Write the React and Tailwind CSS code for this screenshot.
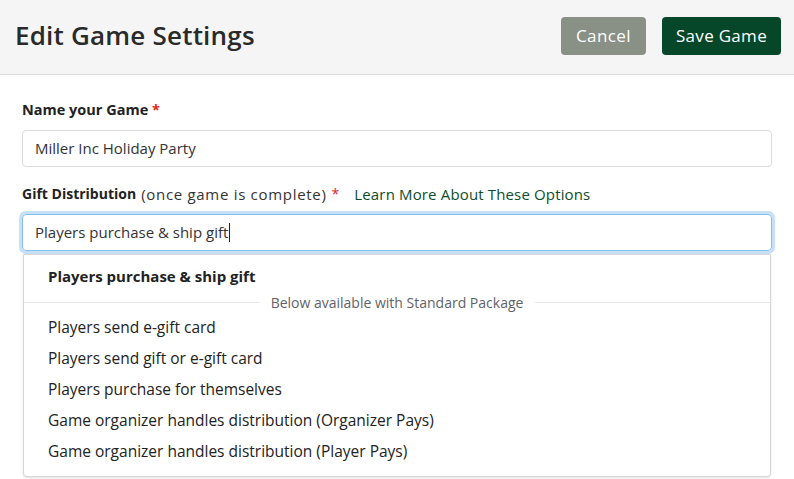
export default function App() {
  const options = [
    'Players send e-gift card',
    'Players send gift or e-gift card',
    'Players purchase for themselves',
    'Game organizer handles distribution (Organizer Pays)',
    'Game organizer handles distribution (Player Pays)',
  ]
  return (
    <div className="w-[794px] h-[479px] overflow-hidden bg-white text-[#222]" style={{ fontFamily: '"Open Sans", sans-serif' }}>
      {/* Header */}
      <div className="h-[75px] bg-[#f5f5f5] border-b border-[#dedede] flex items-center justify-between pl-[15px] pr-[13px] pb-[3px]">
        <h1 className="text-[26px] font-semibold text-[#2a2a2a] tracking-[0.2px]">Edit Game Settings</h1>
        <div className="flex items-center gap-4">
          <button className="h-[38px] px-[15px] rounded bg-[#899085] text-white text-[17px] tracking-[0.4px]">Cancel</button>
          <button className="h-[38px] px-[14px] rounded bg-[#06472a] text-white text-[17px] tracking-[0.3px]">Save Game</button>
        </div>
      </div>

      {/* Form */}
      <div className="px-[22px] pt-[25px]">
        <label className="block text-[14.5px] font-bold text-[#222] leading-5">
          Name your Game <span className="text-[#e02424]">*</span>
        </label>
        <div className="mt-[10px] h-[37px] border border-[#dcdcdc] rounded flex items-center px-3 text-[15px] text-[#333]">
          Miller Inc Holiday Party
        </div>

        <div className="mt-[17px] flex items-center leading-5">
          <span className="font-bold text-[14px]">Gift Distribution</span>
          <span className="ml-[5px] text-[15px] tracking-[0.7px] text-[#333]">(once game is complete)</span>
          <span className="ml-[5px] text-[14px] text-[#e02424]">*</span>
          <span className="ml-[15px] text-[15px] tracking-[0.15px] text-[#0d4d2c]">Learn More About These Options</span>
        </div>
        <div className="relative mt-[10px]">
          <div className="h-[37px] border border-[#86bfe9] ring-[3px] ring-[#c6e1f6] rounded flex items-center px-3 text-[15px] text-[#333]">
            Players purchase &amp; ship gift<span className="inline-block w-px h-[19px] bg-[#222] ml-px" />
          </div>

          {/* Dropdown */}
          <div className="absolute left-px right-px top-[40px] bg-white border border-[#d8d8d8] rounded-b shadow-sm pt-[6px] pb-[9px]">
            <div className="h-[31px] flex items-center px-6 text-[15px] font-bold text-[#222]">Players purchase &amp; ship gift</div>
            <div className="h-[20px] flex items-center">
              <div className="flex-1 border-t border-[#e6e6e6]" />
              <span className="px-3 text-[14px] text-[#5f6368]">Below available with Standard Package</span>
              <div className="flex-1 border-t border-[#e6e6e6]" />
            </div>
            {options.map(o => (
              <div key={o} className="h-[31px] flex items-center px-6 text-[15.5px] text-[#222]">{o}</div>
            ))}
          </div>
        </div>
      </div>
    </div>
  )
}
